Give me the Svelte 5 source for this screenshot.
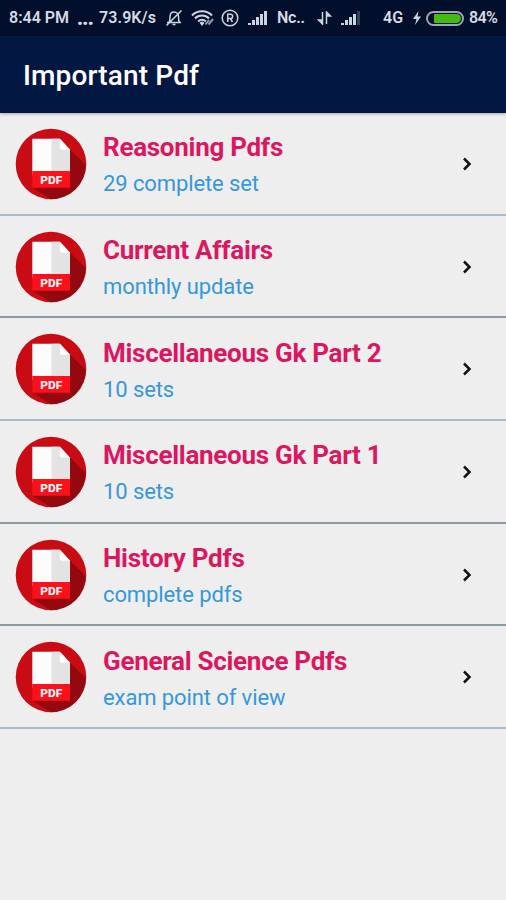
<script lang="ts">
  interface PdfSection {
    title: string;
    detail: string;
    divider: 'light' | 'dark';
  }

  const sections: PdfSection[] = [
    { title: 'Reasoning Pdfs', detail: '29 complete set', divider: 'light' },
    { title: 'Current Affairs', detail: 'monthly update', divider: 'dark' },
    { title: 'Miscellaneous Gk Part 2', detail: '10 sets', divider: 'light' },
    { title: 'Miscellaneous Gk Part 1', detail: '10 sets', divider: 'dark' },
    { title: 'History Pdfs', detail: 'complete pdfs', divider: 'dark' },
    { title: 'General Science Pdfs', detail: 'exam point of view', divider: 'light' },
  ];

  const battery = 84;
</script>

{#snippet signal(bars: number)}
  <svg class="signal" width="22" height="16" viewBox="0 0 22 16">
    {#each [2, 5, 8, 11, 14] as height, i}
      <rect x={i * 4 + 1} y={15 - height} width="3" {height} opacity={i < bars ? 1 : 0.25} />
    {/each}
  </svg>
{/snippet}

<div class="screen">
  <div class="status">
    <span class="time">8:44 PM</span>
    <span class="dots">...</span>
    <span class="speed">73.9K/s</span>
    <svg class="bell" width="18" height="18" viewBox="0 0 18 18">
      <path d="M2 13.500h14M4 13.500c1-1.500 1-3 1-5.500C5 5 6.500 3 9 3s4.500 2 4.500 5c0 2.500 0 4 1 5.500M7.500 15.500h3M1.500 16.500 16.500 1.500" />
    </svg>
    <svg class="wifi" width="23" height="17" viewBox="0 0 23 17">
      <path d="M1 5.500C6-.2 16-.2 21 5.500M4 8.500c3.800-4 10.200-4 14 0M7.200 11.500c2-2.300 5.600-2.300 7.600 0" />
      <path class="solid" d="M11 11.500a2.400 2.400 0 0 1 2.300 1.600L11 16l-2.300-2.900A2.400 2.400 0 0 1 11 11.500z" />
      <path class="link" d="m14.500 14.500 3.500-4.500M17.500 14.500 22 9" />
    </svg>
    <svg class="roaming" width="18" height="18" viewBox="0 0 18 18">
      <circle cx="9" cy="9" r="7.800" />
      <path d="M6.800 13V5.300h2.700a2 2 0 0 1 0 4.200H6.800m2.600 0 2.100 3.500" />
    </svg>
    <span class="first-sim">{@render signal(5)}</span>
    <span class="carrier">Nc..</span>
    <svg class="transfer" width="15" height="14" viewBox="0 0 15 14">
      <path d="M5.500 1v12L1.500 9h4M9.500 13V1l4 4h-4" />
    </svg>
    <span class="second-sim">{@render signal(4)}</span>
    <span class="network">4G</span>
    <svg class="bolt" width="8" height="14" viewBox="0 0 8 14">
      <path d="M5.500 0 0 8h3.500L2 14l6-8.500H4.500z" />
    </svg>
    <div class="battery">
      <div class="charge" style="width: {battery}%"></div>
    </div>
    <span class="percent">{battery}%</span>
  </div>

  <header>
    <h1>Important Pdf</h1>
  </header>

  <ul>
    {#each sections as section}
      <li class={section.divider}>
        <svg class="pdf" width="72" height="72" viewBox="0 0 72 72">
          <circle cx="36" cy="36" r="35.300" fill="#c90b13" />
          <path d="M54.500 21 70.800 37A35.300 35.300 0 0 1 36 71.300L18 60z" fill="#940910" />
          <path d="M17.300 10.700h27.500l10.200 11v25H17.300z" fill="#fcfcfc" />
          <path d="M36.500 10.700h8.300l10.200 11v25H36.500z" fill="#e4e3e3" />
          <path d="M44.800 10.700v8.500q0 2.500 2.500 2.500H55z" fill="#fff" />
          <path d="M17.300 43H55v16.800H17.300z" fill="#fb101b" />
          <text x="36.300" y="55.500" textLength="22" lengthAdjust="spacingAndGlyphs">PDF</text>
        </svg>
        <div class="label">
          <h2>{section.title}</h2>
          <p>{section.detail}</p>
        </div>
        <svg class="chevron" width="10" height="16" viewBox="0 0 10 16">
          <path d="m2 2.500 5.500 5.500L2 13.500" />
        </svg>
      </li>
    {/each}
  </ul>
</div>

<style>
  :global(body) {
    background: #eee;
  }

  .screen {
    height: 900px;
    overflow: hidden;
    background: #eee;
    font-family: Roboto, sans-serif;
  }

  .status {
    display: flex;
    align-items: center;
    height: 36px;
    box-sizing: border-box;
    padding-left: 9px;
    background: #020f2c;
    color: #d5dae3;
    font-size: 16px;
    font-weight: 600;
    line-height: 36px;
    white-space: nowrap;
  }

  .status > * {
    flex: none;
  }

  .status svg {
    display: block;
    fill: #ced4df;
  }

  .time {
    width: 68px;
  }

  .dots {
    width: 22px;
    font-size: 20px;
    font-weight: 900;
    letter-spacing: -0.7px;
  }

  .speed {
    width: 66px;
    letter-spacing: 0.1px;
  }

  .status .bell,
  .status .wifi,
  .status .roaming {
    fill: none;
    stroke: #ced4df;
    stroke-width: 1.5;
  }

  .status .wifi {
    margin-left: 8px;
    stroke-width: 2;
  }

  .wifi .solid {
    fill: #ced4df;
    stroke: none;
  }

  .wifi .link {
    stroke: #8e98aa;
  }

  .roaming {
    margin-left: 7px;
  }

  .first-sim {
    margin-left: 8px;
  }

  .carrier {
    width: 30px;
    margin-left: 8px;
    letter-spacing: -0.2px;
  }

  .transfer {
    margin-left: 10px;
  }

  .status .transfer {
    stroke: #ced4df;
    stroke-width: 1.5;
  }

  .second-sim {
    margin-left: 8px;
  }

  .network {
    width: 21px;
    margin-left: 21px;
  }

  .bolt {
    margin-left: 9px;
  }

  .battery {
    width: 38px;
    height: 15px;
    box-sizing: border-box;
    margin-left: 5px;
    padding: 1px;
    border: 2px solid #a0a5b1;
    border-radius: 8px;
  }

  .charge {
    height: 100%;
    margin-left: auto;
    border-radius: 1px 5px 5px 1px;
    background: #43bc10;
  }

  .percent {
    margin-left: 5px;
    letter-spacing: -0.6px;
  }

  header {
    position: relative;
    display: flex;
    align-items: center;
    height: 77px;
    box-sizing: border-box;
    padding: 2px 23px 0;
    background: #031743;
    box-shadow: 0 1px 3px rgba(0, 0, 0, 0.3);
  }

  h1 {
    margin: 0;
    color: #fff;
    font-size: 28px;
    font-weight: 500;
    letter-spacing: 0.15px;
  }

  ul {
    margin: 0;
    padding: 0;
    list-style: none;
  }

  li {
    display: flex;
    align-items: center;
    height: 102.7px;
    box-sizing: border-box;
    padding: 1px 34px 0 15px;
    border-bottom: 2px solid #adbbc4;
  }

  li.dark {
    border-bottom-color: #899b9f;
  }

  .pdf text {
    fill: #fff;
    font-size: 11px;
    font-weight: 800;
    text-anchor: middle;
  }

  .label {
    flex: 1;
    margin-left: 16px;
    padding-top: 4px;
  }

  h2 {
    margin: 0;
    color: #da1760;
    font-size: 26px;
    font-weight: 700;
    letter-spacing: -0.28px;
    line-height: 36px;
  }

  p {
    margin: 0;
    color: #3698da;
    font-size: 22px;
    letter-spacing: -0.1px;
    line-height: 37px;
  }

  .chevron path {
    fill: none;
    stroke: #111;
    stroke-width: 2.5;
  }
</style>
